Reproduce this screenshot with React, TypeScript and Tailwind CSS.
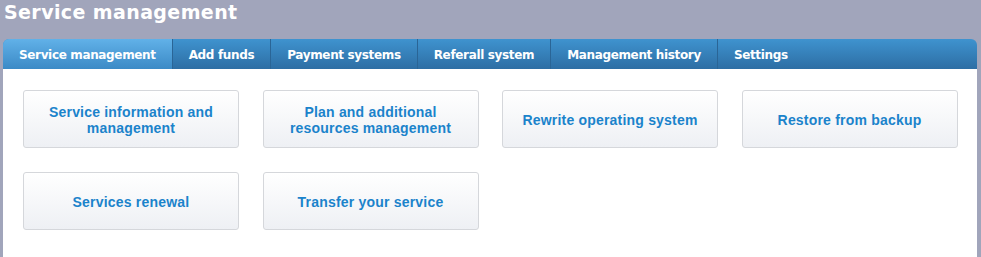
import React from "react";

const tabs = [
  "Service management",
  "Add funds",
  "Payment systems",
  "Referall system",
  "Management history",
  "Settings",
];

const buttons = [
  ["Service information and", "management"],
  ["Plan and additional", "resources management"],
  ["Rewrite operating system"],
  ["Restore from backup"],
  ["Services renewal"],
  ["Transfer your service"],
];

export default function App() {
  return (
    <div className="w-[981px] h-[257px] bg-[#a1a5bb] overflow-hidden flex flex-col" style={{ fontFamily: '"DejaVu Sans", Verdana, sans-serif' }}>
      <div className="h-[39px] pl-[4px] pt-[1px] text-white font-bold text-[19px] leading-[22px] tracking-[0.4px]">
        Service management
      </div>
      <div className="ml-[3px] w-[974px] flex-1 flex flex-col">
        <div className="h-[30px] flex rounded-t-[6px] overflow-hidden bg-gradient-to-b from-[#3f93cf] to-[#2d6ea4]">
          {tabs.map((t, i) => (
            <div
              key={t}
              className={
                "h-full flex items-center pt-[2px] px-[16px] text-white font-bold text-[12px] tracking-[-0.35px] border-r border-[#2a6596] " +
                (i === 0 ? "bg-gradient-to-b from-[#61b1e8] to-[#3b8ac6]" : "") +
                (i === tabs.length - 1 ? " border-r-0" : "")
              }
            >
              {t}
            </div>
          ))}
        </div>
        <div className="flex-1 bg-white pl-[20px] pt-[21px] grid grid-cols-[216px_216px_216px_216px] gap-x-[23.5px] gap-y-[24px] content-start" style={{ fontFamily: '"Liberation Sans", Arial, sans-serif' }}>
          {buttons.map((b, i) => (
            <div
              key={i}
              className="h-[58px] pt-[2px] rounded-[3px] border border-[#d5d7db] bg-gradient-to-b from-[#ffffff] to-[#eef0f4] flex flex-col items-center justify-center text-[#1b83cb] font-bold text-[14px] tracking-[0.2px] leading-[16px] text-center"
            >
              {b.map((l) => (
                <div key={l}>{l}</div>
              ))}
            </div>
          ))}
        </div>
      </div>
    </div>
  );
}
